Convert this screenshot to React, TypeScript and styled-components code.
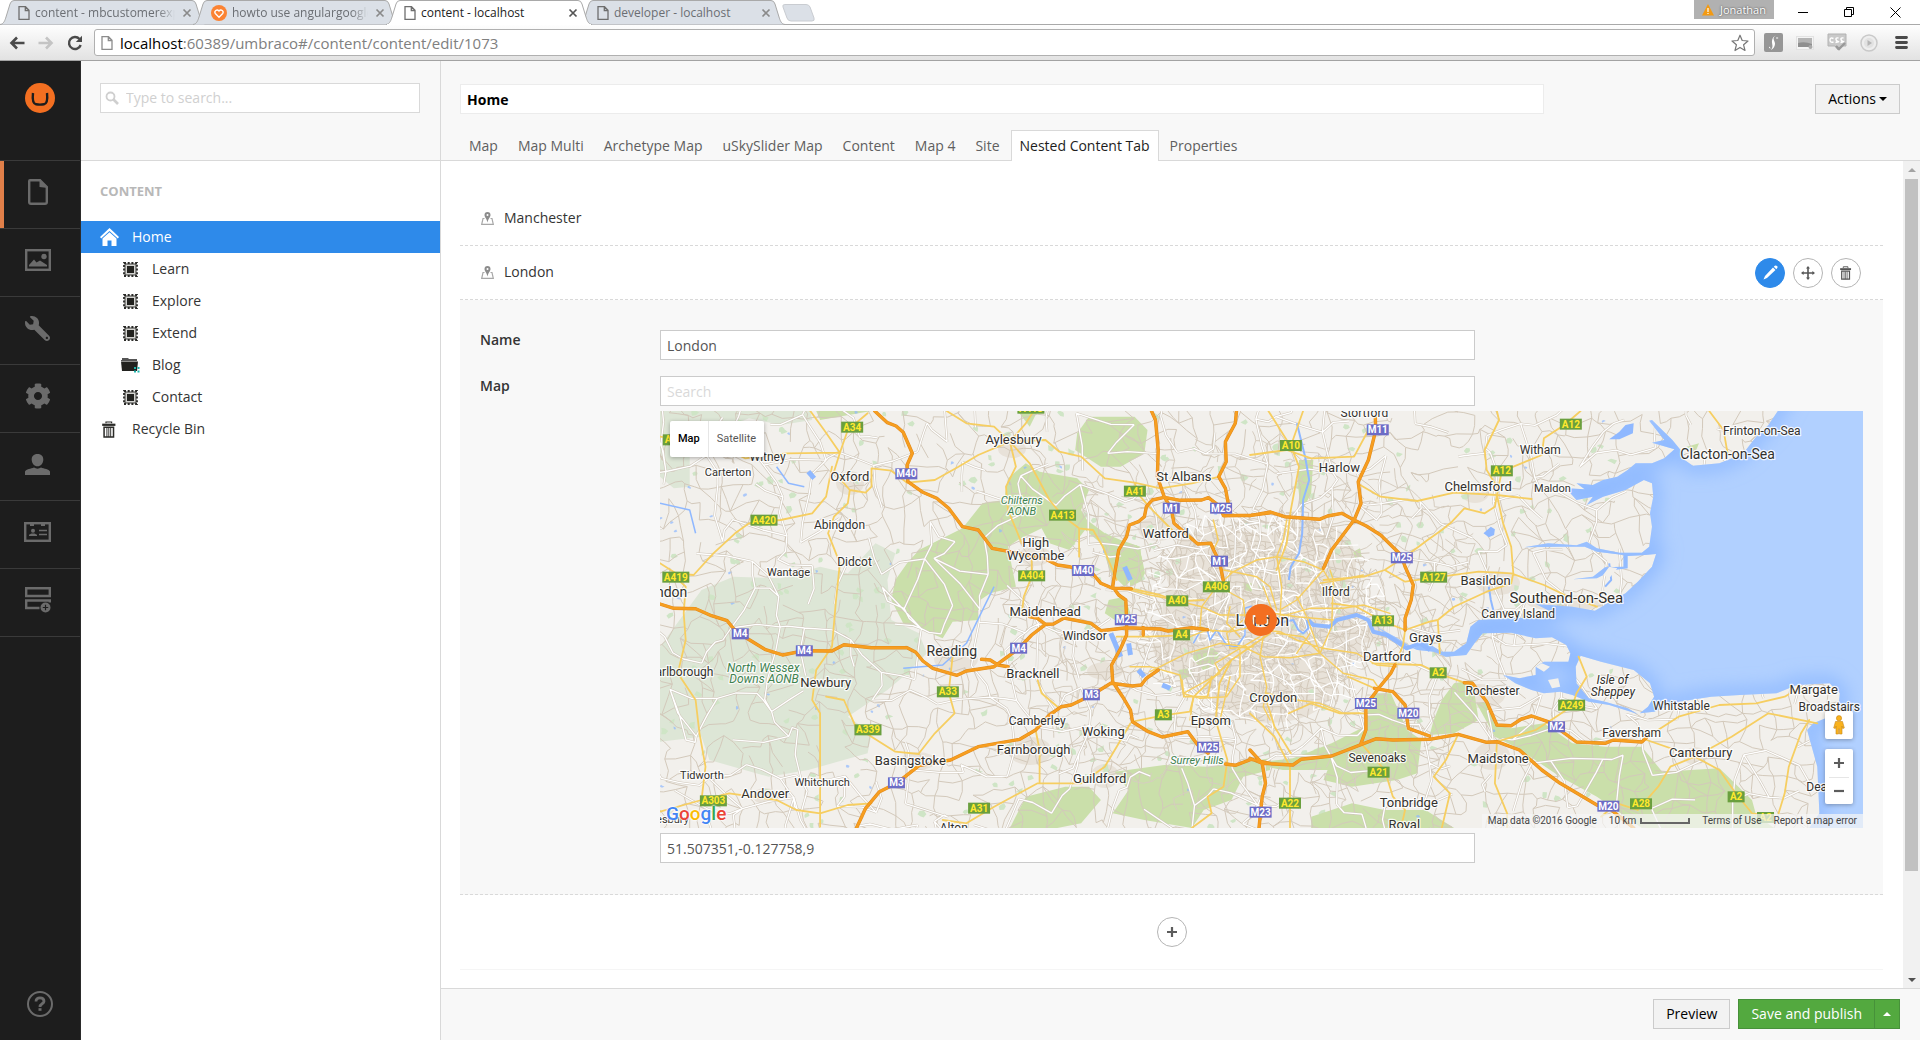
import React from "react";
import styled, { createGlobalStyle, css } from "styled-components";
import { FaCog, FaWrench } from "react-icons/fa";

const GlobalStyle = createGlobalStyle`
  *, *::before, *::after { box-sizing: border-box; }
  html, body, #root { height: 100%; }
  body { margin: 0; overflow: hidden; background: #fff; color: #343434; font: 14px/20px "Open Sans", "Noto Sans", sans-serif; }
  a { color: inherit; text-decoration: none; }
  button, input { font: inherit; color: inherit; margin: 0; border-radius: 0; }
  button { padding: 0; border: 0; background: none; cursor: pointer; }
  svg { display: block; flex: none; }
`;

/* ---------- browser window ---------- */

const Window = styled.div`display: flex; flex-direction: column; height: 100vh;`;
const TabStrip = styled.div`display: flex; align-items: flex-start; height: 25px; border-bottom: 1px solid #a9a9a9; background: #fff;`;
const TabSlot = styled.div<{ $active?: boolean }>`
  position: relative; z-index: ${p => (p.$active ? 2 : 1)}; display: flex; align-items: center;
  width: 193px; height: 25px; padding: 0 0 0 18px; color: ${p => (p.$active ? "#222" : "#6b6e73")};
`;
const TabShape = styled.svg`position: absolute; left: 0; top: 0; z-index: -1;`;
const TabTitle = styled.span<{ $fade?: boolean }>`
  flex: 1; margin-left: 5px; overflow: hidden; white-space: nowrap; font-size: 12px; line-height: 24px;
  ${p => p.$fade && css`mask-image: linear-gradient(to right, #000 88%, transparent);`}
`;
const TabClose = styled.button`width: 12px; height: 12px; margin: 0 0 0 6px;`;
const NewTab = styled.button`margin: 4px 0 0 10px;`;
const Spacer = styled.div`flex: 1;`;
const Profile = styled.button`
  display: flex; align-items: center; gap: 6px; height: 19px; width: 80px; padding: 0 8px; background: #b1b1b1; color: #fff;
  font-size: 11px; line-height: 18px; text-shadow: 0 0 2px #333;
`;
const WindowButton = styled.button`display: grid; place-items: center; width: 46px; height: 24px;`;
const WindowButtons = styled.div`display: flex; margin-left: 6px; padding-right: 2px;`;

const Toolbar = styled.div`
  display: flex; align-items: center; height: 36px; padding: 0 9px; border-bottom: 1px solid #a3a3a3;
  background: linear-gradient(#fefefe, #e2e2e2);
`;
const NavButton = styled.button`display: grid; place-items: center; width: 16px; height: 20px; margin-right: 13px;`;
const AddressBar = styled.div`
  display: flex; align-items: center; flex: 1; height: 27px; margin-left: -2px; padding: 0 5px 0 6px; border: 1px solid #b0b0b0; border-radius: 3px; background: #fff;
`;
const Address = styled.span`flex: 1; margin-left: 7px; font-size: 15px; line-height: 24px; color: #808080; b { font-weight: 400; color: #000; }`;
const Extensions = styled.div`display: flex; align-items: center; gap: 12px; margin-left: 8px;`;
const Extension = styled.button`display: grid; place-items: center; width: 20px; height: 20px;`;

/* ---------- back office ---------- */

const Office = styled.div`display: flex; flex: 1; min-height: 0;`;
const Sections = styled.nav`
  display: flex; flex-direction: column; width: 81px; background: #1d1d1d; border-right: 1px solid #2b2b2b; color: #6b6b6b;
`;
const Logo = styled.a`display: flex; justify-content: center; align-items: flex-start; height: 100px; padding-top: 22px; border-bottom: 1px solid #3a3a3a;`;
const Section = styled.a<{ $active?: boolean }>`
  display: grid; place-items: center; height: 68px; padding: 0 5px 5px 0; border-bottom: 1px solid #3a3a3a;
  box-shadow: ${p => (p.$active ? "inset 4px 0 0 #e07f49" : "none")};
`;
const Help = styled.a`display: grid; place-items: center; height: 72px; margin-top: auto;`;

const TreePane = styled.aside`width: 360px; border-right: 1px solid #d9d9d9; background: #fff;`;
const SearchBar = styled.form`height: 100px; padding: 22px 20px 0 19px; background: #f8f8f8; border-bottom: 1px solid #d9d9d9;`;
const SearchField = styled.label`
  display: flex; align-items: center; gap: 7px; height: 30px; padding: 0 4px; border: 1px solid #d9d9d9; background: #fff;
  input { flex: 1; min-width: 0; border: 0; padding: 0; outline: 0; background: none; &::placeholder { color: #d0d0d0; opacity: 1; } }
`;
const TreeTitle = styled.h2`margin: 20px 0 19px; padding-left: 19px; font-size: 13px; line-height: 21px; font-weight: 700; color: #b8b8b8; text-transform: uppercase;`;
const Tree = styled.ul`margin: 0; padding: 0; list-style: none;`;
const TreeLink = styled.a<{ $level: number; $selected?: boolean }>`
  display: flex; align-items: center; gap: ${p => (p.$level ? 12 : 13)}px; height: 32px; padding-left: ${p => (p.$level ? 39 : 18)}px;
  background: ${p => (p.$selected ? "#2e8aea" : "none")}; color: ${p => (p.$selected ? "#fff" : "#343434")};
`;
const TreeIcon = styled.span`display: grid; place-items: center; width: 20px;`;

const Editor = styled.main`display: flex; flex: 1; flex-direction: column; min-width: 0;`;
const EditorHeader = styled.header`
  display: flex; flex-direction: column; justify-content: space-between; height: 100px; padding: 23px 20px 0 19px;
  background: #f8f8f8; border-bottom: 1px solid #d9d9d9;
`;
const HeaderRow = styled.div`display: flex; justify-content: space-between; gap: 20px;`;
const NameInput = styled.input`flex: 0 1 1084px; min-width: 0; height: 30px; padding: 0 6px; border: 1px solid #ececec; background: #fff; outline: 0; font-size: 14px; font-weight: 700; color: #000;`;
const Button = styled.button<{ $primary?: boolean }>`
  display: flex; align-items: center; gap: 3px; height: 30px; padding: 0 12px; white-space: nowrap;
  border: 1px solid ${p => (p.$primary ? "#47913a" : "#cbcbcb")}; background: ${p => (p.$primary ? "#53a93f" : "#f2f2f2")};
  color: ${p => (p.$primary ? "#fff" : "#000")};
`;
const Caret = styled.span<{ $up?: boolean }>`
  width: 0; height: 0; border: 4px solid transparent;
  ${p => (p.$up ? css`border-top: 0; border-bottom-color: #fff;` : css`border-bottom: 0; border-top-color: #000;`)}
`;
const Tabs = styled.div`display: flex; gap: 2px; margin-bottom: -1px;`;
const Tab = styled.button<{ $active?: boolean }>`
  height: 31px; padding: 0 8px; border: 1px solid transparent; border-bottom: 0; color: #5f5f5f;
  ${p => p.$active && css`border-color: #d9d9d9; background: #fff; color: #1d1d1d;`}
`;

const Scroller = styled.div`display: flex; flex: 1; min-height: 0;`;
const Content = styled.div`flex: 1; min-width: 0; overflow: hidden; padding: 31px 20px 0 19px;`;
const Scrollbar = styled.div`display: flex; flex-direction: column; align-items: center; justify-content: space-between; width: 17px; padding: 7px 0 6px; background: #f1f1f1;`;
const Thumb = styled.div`width: 13px; flex: 0 0 85%; margin: 7px 0 auto; background: #c1c1c1;`;
const ScrollArrow = styled.span<{ $up?: boolean }>`
  width: 0; height: 0; border: 4px solid transparent;
  ${p => (p.$up ? css`border-top: 0; border-bottom-color: #a3a3a3;` : css`border-bottom: 0; border-top-color: #505050;`)}
`;
const ItemRow = styled.div`display: flex; align-items: center; gap: 10px; height: 54px; padding: 0 22px 0 21px; border-bottom: 1px dashed #d9d9d9;`;
const ItemName = styled.span`flex: 1; padding-bottom: 2px;`;
const ItemTools = styled.div`display: flex; gap: 8px;`;
const RoundButton = styled.button<{ $active?: boolean }>`
  display: grid; place-items: center; width: 30px; height: 30px; border-radius: 50%;
  border: 1px solid ${p => (p.$active ? "#2e8aea" : "#b5b5b5")}; background: ${p => (p.$active ? "#2e8aea" : "#fff")};
`;
const Panel = styled.div`display: grid; gap: 16px; padding: 30px 20px 31px; background: #f8f8f8; border-bottom: 1px dashed #d9d9d9;`;
const Field = styled.div`display: grid; grid-template-columns: 180px minmax(0, 1fr);`;
const FieldLabel = styled.label`font-weight: 600; line-height: 20px;`;
const FieldBody = styled.div`display: grid; gap: 5px;`;
const TextInput = styled.input`
  width: 100%; max-width: 815px; height: 30px; padding: 0 6px; border: 1px solid #cbcbcb; background: #fff; color: #555; outline: 0;
  &::placeholder { color: #d9d9d9; opacity: 1; }
`;
const AddRow = styled.div`display: flex; justify-content: center; padding: 22px 0;`;
const Divider = styled.hr`margin: 0; border: 0; border-top: 1px solid #f5f5f5;`;
const Footer = styled.footer`display: flex; justify-content: flex-end; height: 52px; padding: 10px 20px 0; background: #f8f8f8; border-top: 1px solid #d9d9d9;`;
const SplitButton = styled.div`display: flex; margin-left: 8px; button + button { margin-left: -1px; padding: 0 8px; }`;

/* ---------- map ---------- */

const MapFrame = styled.div`position: relative; height: 417px; overflow: hidden; background: #f2f0ec; font-family: Roboto, sans-serif;`;
const MapCanvas = styled.svg`width: 100%; height: 100%;`;
const MapTypes = styled.div`position: absolute; left: 10px; top: 10px; display: flex; border-radius: 2px; background: #fff; box-shadow: 0 1px 4px rgba(0, 0, 0, .3);`;
const MapType = styled.button<{ $active?: boolean }>`
  height: 36px; padding: 0 8px; font-size: 11px; color: ${p => (p.$active ? "#000" : "#565656")}; font-weight: ${p => (p.$active ? 500 : 400)};
  & + & { border-left: 1px solid #e6e6e6; }
`;
const MapSide = styled.div`position: absolute; right: 10px; bottom: 24px; display: grid; gap: 10px;`;
const MapBox = styled.div`display: grid; justify-items: center; width: 28px; border-radius: 2px; background: #fff; box-shadow: 0 1px 4px rgba(0, 0, 0, .3);`;
const MapButton = styled.button`
  display: grid; place-items: center; width: 28px; height: 28px;
  & + & { height: 27px; width: 20px; border-top: 1px solid #e6e6e6; }
`;
const GoogleMark = styled.a`
  position: absolute; left: 6px; bottom: 2px; font: 500 19px/24px Roboto, sans-serif; color: #4285f4;
  text-shadow: 0 0 2px #fff, 0 0 2px #fff, 0 0 3px #fff;
`;
const Letter = styled.span<{ $ink: string }>`color: ${p => p.$ink};`;
const Attribution = styled.div`
  position: absolute; right: 0; bottom: 0; display: flex; align-items: center; height: 14px; padding: 0 6px; gap: 12px;
  background: rgba(245, 245, 245, .72); font-size: 10px; line-height: 14px; color: #444;
`;
const Scale = styled.span`display: flex; align-items: center; gap: 4px;`;
const ScaleBar = styled.span`width: 50px; height: 6px; border: 2px solid #666; border-top: 0;`;

type Pt = [number, number];
type Sheet = (x: number, y: number) => Pt;
/* The survey is digitised in three sheets, each with its own grid. */
const west: Sheet = (x, y) => [(x - 25) / 2.529, (y - 33) / 3];
const east: Sheet = (x, y) => [590 + x / 2.45, (y - 33) / 3];
const city: Sheet = (x, y) => [470 + x / 3, 109 + y / 3];

const trace = (sheet: Sheet, points: string, closed = false) =>
  "M" + points.trim().split(/\s+/).map(p => {
    const [x, y] = p.split(",").map(Number);
    return sheet(x, y).map(n => n.toFixed(1)).join(" ");
  }).join("L") + (closed ? "Z" : "");

const motorwaysWest = [
  "25,612 60,625 115,626 155,647 195,662 210,685 228,703 290,748 335,765 390,752 460,753 490,734 560,743 650,743 672,757 690,783 715,805 776,826 800,813 870,800 932,746 965,705 1000,673 1020,672 1047,654 1115,670 1140,692 1205,683 1290,687 1310,693 1370,683 1410,689",
  "838,778 860,780 880,795 905,800", "960,650 980,655 1000,673", "1247,683 1247,705",
  "568,33 600,68 622,78 640,97 663,160 650,195 652,245 690,277 725,295 755,325 790,380 830,390 865,445 910,455 1000,477 1030,495 1060,500 1120,522 1140,550 1170,565 1217,566",
  "1568,338 1520,346 1450,347 1440,318 1412,293 1395,300 1340,301 1300,292 1270,300 1255,320 1250,350 1235,365 1212,375 1205,410 1185,450 1175,520 1170,560 1185,585 1203,600 1205,661 1205,705 1190,745 1167,795 1170,845 1195,890 1215,930 1220,965 1260,995 1295,1011 1360,995 1385,1035 1411,1060",
  "1455,1092 1480,1096 1520,1078 1568,1090",
  "1268,33 1278,60 1285,150 1283,230 1300,290 1318,326 1325,370 1385,432 1418,430 1425,450 1440,485 1450,545",
  "1483,33 1480,70 1455,125 1457,185 1438,230 1455,265 1462,310",
  "522,1284 545,1225 580,1175 623,1150 680,1097 760,1080 830,1040 935,1018 975,990 1010,945 1040,920 1065,915 1116,886 1165,850 1220,858 1242,855 1255,835 1285,810",
];
const motorwaysEast = [
  "0,347 50,336 85,350 170,358 190,348 225,340 255,360 285,378 320,405 370,465 380,500 400,555 395,600 380,655 380,690",
  "355,795 345,820 315,865 300,890 284,912 284,990 272,1030",
  "0,1075 30,1090 105,1095 125,1078 200,1068 310,1016 350,1020 440,1018 510,1003 580,1027 605,1025 660,1050 715,1110 760,1150 850,1215 880,1225 940,1284",
  "305,865 350,875 380,915 388,985 440,1008",
  "307,50 308,91 290,180 265,245 272,310 255,360 200,450 180,505",
  "525,848 545,850 580,905 605,975 640,977 665,957 690,948 730,965 751,982 800,1026 870,1030 890,1020 960,1026 972,1012",
  "0,1050 30,1090 38,1150 30,1190 22,1284",
];
const trunkWest = [
  "405,33 440,90 480,158 465,215 505,270 545,278 560,260 560,205 610,212 650,248 720,240 780,200 830,165 910,125 1000,120 1035,155 1090,170 1150,235 1225,248 1290,265 1370,250 1440,230",
  "25,110 180,140 240,175 345,160 480,158 500,90 550,40", "505,270 500,310 465,350 450,400 480,490 470,600 460,740 420,810 410,900 430,940 430,1280",
  "25,490 65,520 110,525 160,460 215,400 250,370 330,360 410,340 445,290 460,200",
  "65,533 90,560 85,640 90,720 70,820 115,900 125,1000 140,1100 130,1200",
  "910,125 925,200 900,260 905,330 940,430", "910,125 960,190 1010,300 1043,347 1085,385 1120,390 1145,440 1180,540",
  "965,480 965,529 945,590 940,640", "765,770 755,877 770,940 720,1000 680,1060", "445,890 490,900 520,980 560,1010 620,1055 680,1062",
  "25,1235 130,1200 200,1180 320,1200 370,1230 430,1240 500,1215 560,1210", "740,1260 800,1270 870,1220 980,1150 1090,1150 1150,1100 1180,1040 1215,970",
  "1220,965 1298,946 1365,935 1375,890 1470,780 1568,700", "1217,566 1290,585 1333,604 1400,600",
  "1180,710 1260,710 1344,706",
  "1470,780 1440,850 1430,960 1460,1080 1450,1160 1410,1190 1420,1240 1370,1284", "980,840 990,880 1030,920", "1085,385 1085,470",
  "1225,248 1240,290 1262,320 1320,390", "750,33 800,70 870,80 910,125 950,70 970,33", "975,990 985,1050 985,1150",
  "1345,840 1350,890 1410,890 1420,830",
];
const trunkEast = [
  "130,33 100,138 120,200 100,330 90,430 65,510", "0,165 90,150 150,175 255,170 290,90", "270,255 320,290 410,303 500,278 605,285 690,297",
  "810,33 770,75 720,115 715,165 617,214 605,285", "605,33 610,60 575,150 580,210 605,260", "605,285 620,370 640,440 645,520 640,550",
  "605,285 600,320 575,340 525,325 495,365 470,390 435,420 380,470 330,510 280,530 180,540", "330,510 380,545 450,533 560,515 640,520 720,555 780,590 850,620",
  "200,610 260,620 326,664 380,690 440,665 460,660 500,620 580,575 640,550", "460,660 465,760", "380,690 375,735 355,795",
  "300,790 420,795 461,820 525,848", "240,830 305,865", "40,900 60,980 100,1060", "272,1030 330,1110 350,1190 380,1230 370,1284",
  "0,940 60,1010 98,1100 98,1284", "510,1003 480,1080 450,1130 490,1180 470,1284", "605,1025 600,1150 630,1240 630,1284", "605,1025 700,990 750,950 790,917 800,880 825,830 805,770",
  "972,1012 1050,950 1150,915 1240,910 1310,890 1350,860", "972,1020 1090,1070 1150,1110 1190,1180 1230,1240 1284,1250", "1090,1070 1030,1100 1000,1160 950,1230",
  "1090,1070 1180,1010 1270,940 1390,970", "1370,960 1350,1000 1320,1100 1310,1180 1295,1240", "1125,33 1160,90 1170,160", "45,33 90,120",
  "95,940 150,910 220,940 284,940", "860,1250 900,1210 950,1230",
];
const trunkCity = [
  "0,210 60,225 110,235 215,260 270,285 350,285", "260,195 340,240 345,290", "300,160 380,120 440,110 520,125 580,150 600,185", "310,155 380,170 420,200 440,270",
  "280,150 310,155 260,200 215,260 210,320 250,335", "470,0 460,60 440,110 455,200 450,290", "250,0 265,60 250,90", "570,190 630,180 700,165",
  "180,350 230,330 300,335 370,320 450,290 540,265 640,265 700,255 780,280", "500,230 530,290 570,400 520,350 440,340", "400,200 430,280 500,290 610,300",
  "600,150 610,180 605,320 570,400", "400,330 450,335 500,360 580,385 680,400 740,435 800,440", "340,380 400,410 480,413 570,400 640,460 730,480 750,510",
  "390,350 330,385 255,430 270,460 160,520", "0,440 60,440 150,465 160,520 210,535 290,530 330,470 330,390", "400,350 390,410 410,500 400,560 420,600",
  "350,380 270,370 170,400 60,455", "190,530 180,600", "300,470 270,600", "410,520 500,540 570,550 640,580 690,580", "500,400 540,340", "580,150 500,240 450,270",
  "340,300 290,340 300,385 370,380", "300,260 290,310 330,350",
];
const seaPath = trace(east,
  "1330,-60 1293,33 1270,75 1240,110 1215,150 1190,170 1150,190 1085,197 1065,180 1055,150 1035,120 985,60 978,62 1015,120 985,128 1040,148 1015,175 985,190 945,190 925,210 900,230 865,240 840,255 800,250 820,268 775,265 785,280 800,300 840,290 825,315 865,290 920,270 965,240 985,250 988,290 980,340 985,380 978,440 960,458 905,458 850,445 825,425 800,436 730,430 670,442 760,440 820,440 850,455 915,465 915,500 870,502 840,530 790,538 850,535 890,510 925,505 925,468 960,466 995,462 985,500 950,545 920,580 890,600 845,632 790,620 700,612 745,640 720,652 640,655 560,660 540,680 530,730 500,755 470,755 430,725 400,745 355,710 310,680 360,725 410,750 450,755 480,770 530,765 550,730 570,700 640,698 700,715 740,712 775,735 785,760 780,785 720,785 700,800 700,825 660,835 620,825 650,850 690,870 720,880 760,875 790,885 830,905 880,915 950,942 925,925 870,905 830,895 800,850 798,800 810,767 860,785 940,810 980,850 990,890 975,920 955,940 990,935 1050,905 1130,890 1200,885 1290,880 1340,855 1420,850 1445,880 1440,940 1380,970 1365,990 1390,1100 1395,1240 1370,1284 1350,1400 1650,1400 1650,-60", true);

const palesWest = [
  "25,33 405,33 410,60 330,75 250,55 180,90 100,120 100,260 60,265 25,230",
  "25,740 130,570 210,530 330,535 430,500 500,520 570,430 620,460 600,540 610,660 680,700 700,760 640,830 600,870 500,950 560,1000 550,1060 400,1110 300,1130 150,1080 130,1010 25,1025",
];
const greensWest = [
  "620,540 650,490 680,450 790,385 840,310 895,300 905,235 950,190 985,215 1080,235 1110,270 1090,330 1105,360 1150,400 1190,420 1240,440 1245,510 1200,560 1165,520 1140,430 1100,390 1060,450 1010,430 990,385 930,420 905,440 925,560 860,580 835,600 830,660 765,665 740,715 690,690 640,670 610,600",
  "1080,100 1110,50 1225,50 1258,90 1250,160 1190,200 1140,200 1075,150", "1160,600 1200,590 1215,640 1175,660 1150,640", "560,33 420,33 430,60",
  "1175,1115 1300,1095 1410,1100 1460,1095 1568,1075 1568,1110 1500,1130 1470,1200 1400,1230 1370,1284 1250,1260 1170,1240 1210,1170",
  "950,1190 1050,1160 1110,1160 1140,1200 1090,1270 1030,1284 910,1284", "1400,750 1430,770 1410,810 1390,790", "930,33 980,33 960,80",
];
const greensEast = [
  "0,1090 105,1075 200,1030 280,980 300,880 345,880 385,990 420,1020 410,1120 360,1140 250,1160 180,1140 190,1110 80,1110", "470,900 500,850 545,840 560,960 500,1000 440,1005 450,960",
  "555,910 580,905 600,975 640,985 720,970 790,1030 870,1040 960,1040 1010,1115 1150,1105 1230,1200 1240,1245 1284,1284 960,1284 850,1190 760,1130 650,1040 600,1010",
  "150,1250 250,1210 330,1230 430,1230 500,1284 150,1284", "120,180 155,180 150,280 125,340 118,260", "1070,140 1100,130 1090,160",
];
const parksCity = [
  "190,400 215,385 250,385 270,405 245,440 220,450 190,420", "340,190 365,190 365,215 345,210", "145,450 180,445 190,465 150,480", "0,90 20,75 35,110 45,160 30,185 0,200", "670,95 690,85 695,110 675,115",
];
const urban: [number, number, number, number][] = [
  [598, 205, 96, 84], [560, 160, 54, 44], [650, 150, 46, 40], [610, 270, 66, 42], [540, 230, 48, 40], [660, 230, 44, 30], [296, 248, 22, 13], [190, 72, 14, 12], [352, 38, 14, 9], [498, 118, 20, 12], [700, 222, 26, 10],
  [815, 82, 14, 10], [838, 172, 22, 12], [905, 192, 38, 8], [820, 285, 25, 12], [832, 345, 18, 14], [370, 340, 22, 14], [445, 365, 14, 12], [258, 350, 18, 9], [1035, 345, 12, 9], [375, 145, 16, 10], [445, 260, 18, 9], [105, 385, 12, 8],
];

const rng = (seed: number) => () => {
  seed = (seed * 1664525 + 1013904223) >>> 0;
  return seed / 4294967296;
};

/* Local roads: a shaken lattice of nodes joined to their neighbours. */
const lanes = (seed: number, step: number, keep: number, inside: (x: number, y: number) => boolean) => {
  const r = rng(seed);
  const cols = Math.ceil(1203 / step) + 2;
  const rows = Math.ceil(417 / step) + 2;
  const node: Pt[][] = [];
  for (let j = 0; j < rows; j++) {
    node.push([]);
    for (let i = 0; i < cols; i++) node[j].push([(i - .5 + (r() - .5) * .9) * step, (j - .5 + (r() - .5) * .9) * step]);
  }
  let d = "";
  const join = (a: Pt, b: Pt) => {
    const mx = (a[0] + b[0]) / 2 + (r() - .5) * step * .35;
    const my = (a[1] + b[1]) / 2 + (r() - .5) * step * .35;
    if (r() < keep && inside(mx, my)) d += `M${a[0].toFixed(1)} ${a[1].toFixed(1)}L${mx.toFixed(1)} ${my.toFixed(1)}L${b[0].toFixed(1)} ${b[1].toFixed(1)}`;
  };
  for (let j = 0; j < rows - 1; j++)
    for (let i = 0; i < cols - 1; i++) {
      join(node[j][i], node[j][i + 1]);
      join(node[j][i], node[j + 1][i]);
      if (r() < .2) join(node[j][i], node[j + 1][i + 1]);
    }
  return d;
};
const inLondon = (x: number, y: number) => ((x - 600) / 125) ** 2 + ((y - 205) / 105) ** 2 < 1;
const nearLondon = (x: number, y: number) => ((x - 590) / 250) ** 2 + ((y - 215) / 190) ** 2 < 1;
const countryLanes = lanes(7, 17, .66, () => true);
const suburbLanes = lanes(41, 13, .4, nearLondon);
const sideRoads = lanes(21, 34, .42, () => true);
const streets = lanes(5, 7, .66, inLondon);
const boroughRoads = lanes(33, 14, .62, inLondon);

const scatter = (seed: number, count: number, size: number, maxX: number) => {
  const r = rng(seed);
  let d = "";
  for (let k = 0; k < count; k++) {
    const x = r() * maxX, y = r() * 417;
    const pts = Array.from({ length: 6 }, (_, i) => {
      const a = (i / 6) * Math.PI * 2, q = size * (.35 + r() * .9);
      return `${(x + Math.cos(a) * q).toFixed(1)} ${(y + Math.sin(a) * q * .9).toFixed(1)}`;
    });
    d += "M" + pts.join("L") + "Z";
  }
  return d;
};
const copses = scatter(3, 330, 4, 960);
const ponds = scatter(12, 70, 2, 960);

type Label = [Sheet, number, number, string, number, ("park" | "isle" | "end" | "start")?];
const labels: Label[] = [
  [west, 919, 118, "Aylesbury", 13], [west, 505, 229, "Oxford", 13], [west, 297, 170, "Witney", 12], [west, 197, 217, "Carterton", 11], [west, 479, 374, "Abingdon", 12],
  [west, 517, 485, "Didcot", 12], [west, 350, 517, "Wantage", 11], [west, 940, 300, "Chilterns", 11, "park"], [west, 940, 332, "AONB", 11, "park"], [west, 975, 427, "High", 13],
  [west, 975, 466, "Wycombe", 13], [west, 1350, 229, "St Albans", 13], [west, 1304, 400, "Watford", 13], [west, 999, 634, "Maidenhead", 13], [west, 1099, 706, "Windsor", 12],
  [west, 763, 754, "Reading", 14], [west, 968, 819, "Bracknell", 13], [west, 94, 577, "Swindon", 14, "end"], [west, 160, 814, "Marlborough", 12, "end"],
  [west, 286, 804, "North Wessex", 12, "park"], [west, 288, 836, "Downs AONB", 12, "park"], [west, 444, 848, "Newbury", 13], [west, 979, 961, "Camberley", 12], [west, 1146, 994, "Woking", 13],
  [west, 970, 1048, "Farnborough", 13], [west, 658, 1081, "Basingstoke", 13], [west, 131, 1125, "Tidworth", 11], [west, 435, 1146, "Whitchurch", 11], [west, 291, 1180, "Andover", 13],
  [west, 1137, 1134, "Guildford", 13], [west, 1383, 1080, "Surrey Hills", 11, "park"], [west, 1418, 961, "Epsom", 13], [west, 768, 1284, "Alton", 12], [west, 98, 1257, "Amesbury", 11, "end"],
  [east, 280, 38, "Stortford", 12], [east, 219, 202, "Harlow", 13], [east, 711, 148, "Witham", 12], [east, 559, 260, "Chelmsford", 13], [east, 741, 264, "Maldon", 11],
  [east, 1254, 91, "Frinton-on-Sea", 12], [east, 1170, 163, "Clacton-on-Sea", 14], [east, 210, 574, "Ilford", 12], [east, 577, 541, "Basildon", 13], [east, 775, 592, "Southend-on-Sea", 15],
  [east, 657, 642, "Canvey Island", 12], [east, 430, 712, "Grays", 13], [east, 336, 769, "Dartford", 13], [east, 57, 892, "Croydon", 13], [east, 594, 871, "Rochester", 12],
  [east, 888, 838, "Isle of", 12, "isle"], [east, 889, 874, "Sheppey", 12, "isle"], [east, 1381, 868, "Margate", 13], [east, 1419, 919, "Broadstairs", 12], [east, 1057, 916, "Whitstable", 12],
  [east, 935, 997, "Faversham", 12], [east, 1104, 1058, "Canterbury", 13], [east, 312, 1072, "Sevenoaks", 12], [east, 608, 1075, "Maidstone", 13], [east, 389, 1207, "Tonbridge", 13],
  [east, 378, 1274, "Royal", 13], [east, 1363, 1160, "Deal", 12, "start"], [east, 30, 661, "London", 16],
];
const shields: [Sheet, number, number, string][] = [
  [west, 511, 83, "A34"], [west, 60, 121, "A40"], [west, 648, 223, "M40"], [west, 288, 362, "A420"], [west, 65, 533, "A419"], [west, 1226, 275, "A41"], [west, 1043, 347, "A413"],
  [west, 1318, 326, "M1"], [west, 1444, 326, "M25"], [west, 1440, 485, "M1"], [west, 1095, 513, "M40"], [west, 965, 529, "A404"], [west, 1432, 562, "A406"], [west, 1333, 604, "A40"],
  [west, 1203, 661, "M25"], [west, 1344, 706, "A4"], [west, 228, 703, "M4"], [west, 390, 754, "M4"], [west, 932, 746, "M4"], [west, 1116, 886, "M3"], [west, 753, 877, "A33"],
  [west, 1298, 946, "A3"], [west, 551, 991, "A339"], [west, 1411, 1043, "M25"], [west, 623, 1150, "M3"], [west, 160, 1204, "A303"], [west, 832, 1226, "A31"], [west, 963, 26, "A418"],
  [east, 26, 1238, "M23"], [east, 313, 91, "M11"], [east, 100, 138, "A10"], [east, 786, 74, "A12"], [east, 617, 214, "A12"], [east, 372, 475, "M25"], [east, 450, 533, "A127"],
  [east, 326, 664, "A13"], [east, 461, 820, "A2"], [east, 284, 912, "M25"], [east, 388, 941, "M20"], [east, 788, 917, "A249"], [east, 751, 982, "M2"], [east, 315, 1118, "A21"],
  [east, 98, 1211, "A22"], [east, 878, 1220, "M20"], [east, 958, 1213, "A28"], [east, 1191, 1192, "A2"], [east, 1263, 1254, "A2"],
];

const PlaceName = styled.text<{ $size: number; $kind?: string }>`
  font: ${p => (p.$kind === "park" || p.$kind === "isle" ? "italic " : "")}400 ${p => p.$size}px Roboto, sans-serif;
  fill: ${p => (p.$kind === "park" ? "#3f8250" : "#33312d")};
  stroke: #fff; stroke-width: 2.5px; stroke-opacity: .85; stroke-linejoin: round; paint-order: stroke;
  text-anchor: ${p => (p.$kind === "end" || p.$kind === "start" ? p.$kind : "middle")};
`;
const ShieldText = styled.text`font: 700 10px Roboto, sans-serif; text-anchor: middle;`;

const join = (sheet: Sheet, lines: string[], closed = false) => lines.map(p => trace(sheet, p, closed)).join("");
const motorwayPath = join(west, motorwaysWest) + join(east, motorwaysEast);
const trunkPath = join(west, trunkWest) + join(east, trunkEast);
const cityPath = join(city, trunkCity);

function RoadMap() {
  return (
    <MapCanvas viewBox="0 0 1203 417" preserveAspectRatio="xMidYMid slice" role="img" aria-label="Map of London and the south east of England">
      <defs>
        <clipPath id="sea"><path d={seaPath} /></clipPath>
        <filter id="shore"><feGaussianBlur stdDeviation="9" /></filter>
        <mask id="cutout">
          <rect x="-17" y="-17" width="34" height="34" fill="#fff" />
          <path d="M-7-5V2Q-7 6 0 6T7 2V-5" fill="none" stroke="#000" strokeWidth="2.6" />
        </mask>
      </defs>
      <rect width="1203" height="417" fill="#f2f0ec" />
      {palesWest.map(p => <path key={p} d={trace(west, p, true)} fill="#dde6d6" />)}
      {urban.map(([x, y, rx, ry]) => <ellipse key={`${x}-${y}`} cx={x} cy={y} rx={rx} ry={ry} fill="#e8e2d9" />)}
      <path d={copses} fill="#cfe5c6" />
      {greensWest.map(p => <path key={p} d={trace(west, p, true)} fill="#cadfaa" />)}
      {greensEast.map(p => <path key={p} d={trace(east, p, true)} fill="#cadfaa" />)}
      <path d={join(city, parksCity, true)} fill="#cadfaa" />
      <path d={ponds} fill="#8fb8ff" opacity=".7" />
      <g fill="none" strokeLinejoin="round">
        <path d={countryLanes} stroke="#d3c9bb" strokeWidth="1" />
        <path d={suburbLanes} stroke="#d6cdc0" strokeWidth="1" />
        <path d={streets} stroke="#d3c9bb" strokeWidth="1" />
        <path d={sideRoads} stroke="#cfc7bb" strokeWidth="2.4" />
        <path d={sideRoads} stroke="#fff" strokeWidth="1.3" />
        <path d={boroughRoads} stroke="#fff" strokeWidth="1.2" />
        <path d={trace(east, "115,70 135,170 145,240 130,300 128,400 120,460 100,500 95,540")} stroke="#8fb8ff" strokeWidth="2" />
        <path d={trace(west, "1200,500 1215,540") + trace(west, "1165,700 1190,770") + trace(west, "1210,730 1215,765") + trace(west, "1235,810 1250,830") + trace(west, "400,215 415,235") + trace(west, "1295,855 1315,865")} stroke="#8fb8ff" strokeWidth="5" />
        <path d={trace(west, "25,310 100,330 115,400") + trace(west, "320,200 350,250 390,260") + trace(west, "640,805 740,795 800,730 845,620 870,560") + trace(city, "190,370 210,335 230,325 240,360 260,330 290,375 320,380 345,345 345,265 365,258")} stroke="#8fb8ff" strokeWidth="1.5" />
      </g>
      <path d={seaPath} fill="#b1d0ff" />
      <g clipPath="url(#sea)"><path d={seaPath} fill="none" stroke="#86b3ff" strokeOpacity=".8" strokeWidth="14" filter="url(#shore)" /></g>
      <path d={trace(east, "600,388 598,405 585,412 572,400 590,380", true) + trace(east, "920,75 940,70 938,100 905,118 880,118 905,95", true)} fill="#8fb8ff" />
      <g fill="none" stroke="#8fb8ff" strokeLinejoin="round">
        <path d={trace(city, "535,300 550,315 600,320 620,300 680,285 715,300 730,335 770,345 830,385 870,370 900,390")} strokeWidth="4" />
        <path d={trace(city, "440,310 490,300 505,330 520,340 535,325 530,300")} strokeWidth="2" />
        <path d={trace(east, "585,560 590,600 600,650") + trace(east, "880,490 885,540 870,560")} strokeWidth="2" />
      </g>
      <path d={trace(east, "700,800 715,790 735,800 720,815", true) + trace(east, "730,840 755,835 760,860 740,865", true) + trace(east, "880,500 900,505 880,535 865,525", true)} fill="#f2f0ec" />
      <g fill="none" strokeLinejoin="round" strokeLinecap="round">
        <path d={cityPath} stroke="#f6ce61" strokeWidth="1.4" />
        <path d={trunkPath} stroke="#f6ce61" strokeWidth="1.8" />
        <path d={motorwayPath} stroke="#e08a1c" strokeWidth="3.4" />
        <path d={motorwayPath} stroke="#f79e20" strokeWidth="2.4" />
      </g>
      {shields.map(([sheet, sx, sy, code]) => {
        const [x, y] = sheet(sx, sy);
        const w = code.length * 5 + 7;
        const motorway = code[0] === "M";
        return (
          <g key={`${code}${sx}`}>
            <rect x={x - w / 2} y={y - 6} width={w} height={11} fill={motorway ? "#6c6cc6" : "#6a9f3e"} />
            <ShieldText x={x} y={y + 3} fill={motorway ? "#fff" : "#ffe92e"}>{code}</ShieldText>
          </g>
        );
      })}
      {labels.map(([sheet, sx, sy, name, size, kind]) => {
        const [x, y] = sheet(sx, sy);
        return <PlaceName key={name} x={x} y={y + size * .36} $size={size} $kind={kind}>{name}</PlaceName>;
      })}
      <g transform="translate(601 209)">
        <circle r="16" fill="#f36f21" mask="url(#cutout)" />
      </g>
    </MapCanvas>
  );
}

/* ---------- icons ---------- */

const PageIcon = ({ tone = "#6e6e6e" }) => (
  <svg width="12" height="14" viewBox="0 0 12 14" fill="none" stroke={tone} strokeWidth="1.3"><path d="M1 .7H7.500L11 4.200V13.300H1ZM7.300 1V4.500H11" /></svg>
);
const CloseIcon = ({ tone = "#8a8a8a" }) => (
  <svg width="12" height="12" viewBox="0 0 12 12" stroke={tone} strokeWidth="1.700"><path d="M2.500 2.500L9.500 9.500M9.500 2.500L2.500 9.500" /></svg>
);
const UmbracoMark = () => (
  <svg width="30" height="30" viewBox="0 0 30 30"><circle cx="15" cy="15" r="15" fill="#f36f21" /><path d="M8 10Q6.800 20.500 11 21.300Q15 22 19 21.300Q23.200 20.500 22 10" fill="none" stroke="#1d1d1d" strokeWidth="2.400" /></svg>
);
const DocumentIcon = () => (
  <svg width="20" height="26" viewBox="0 0 20 26"><path d="M2 1.200H12L18.800 8V23Q18.800 24.800 17 24.800H3Q1.200 24.800 1.200 23V2Q1.200 1.200 2 1.200Z" fill="none" stroke="currentColor" strokeWidth="2.400" /><path d="M11.500 0L20 9L11.500 8Z" fill="currentColor" /></svg>
);
const MediaIcon = () => (
  <svg width="26" height="22" viewBox="0 0 26 22"><rect x="1.200" y="1.200" width="23.600" height="19.600" fill="none" stroke="currentColor" strokeWidth="2.400" /><circle cx="19" cy="7.500" r="2.700" fill="currentColor" /><path d="M4 17.500V16L9 10.500L11.500 13.500L15 11.500L22 16V17.500Z" fill="currentColor" /></svg>
);
const FlippedWrench = styled(FaWrench)`transform: scaleX(-1);`;
const UserIcon = () => (
  <svg width="25" height="21" viewBox="0 0 25 21" fill="currentColor"><path d="M12.500 0C16.500 0 18.500 2.500 18.300 6C18 9.500 15.800 12.300 12.500 12.300S7 9.500 6.700 6C6.500 2.500 8.500 0 12.500 0ZM0 21V17.500C1 15 6 14.700 9 13.500C11 15 14 15 16 13.500C19 14.700 24 15 25 17.500V21Z" /></svg>
);
const MemberIcon = () => (
  <svg width="27" height="20" viewBox="0 0 27 20" fill="none" stroke="currentColor"><rect x="1.200" y="1.200" width="24.600" height="17.600" strokeWidth="2.400" /><path d="M6 2.500H10M17 2.500H21" strokeWidth="3" /><path d="M15 8.500H23M15 12.500H23" strokeWidth="1.600" /><circle cx="9" cy="8.800" r="2" fill="currentColor" stroke="none" /><path d="M5 14V12.800L7.500 11.500H10.500L13 12.800V14Z" fill="currentColor" stroke="none" /></svg>
);
const FormsIcon = () => (
  <svg width="26" height="26" viewBox="0 0 26 26" fill="none" stroke="currentColor" strokeWidth="2.400"><path d="M1.200 1.200H24.800V9H1.200Z" /><path d="M14.500 21H1.200V13.500H24.800V15.500" /><circle cx="20.500" cy="20.500" r="5" fill="currentColor" stroke="none" /><path d="M20.500 17.800V23.200M17.800 20.500H23.200" stroke="#1d1d1d" strokeWidth="1.200" /></svg>
);
const HelpIcon = () => (
  <svg width="26" height="26" viewBox="0 0 26 26" fill="none" stroke="currentColor"><circle cx="13" cy="13" r="12" strokeWidth="2" /><path d="M9 10.500Q9 6.800 13 6.800T17 10.200C17 13 13 12.500 13 16" strokeWidth="2.800" /><path d="M11.500 18.500H14.500" strokeWidth="2.600" /></svg>
);
const HomeIcon = () => (
  <svg width="19" height="18" viewBox="0 0 19 18" fill="#fff"><path d="M9.500 0L13 3.300L19 9L17.800 10.400L9.500 3L1.200 10.400L0 9Z" /><path d="M9.500 4.200L16.500 10.500V18H11.500V12.500H7.500V18H2.500V10.500Z" /></svg>
);
const StampIcon = () => (
  <svg width="15" height="15" viewBox="0 0 15 15"><rect x="1" y="1" width="13" height="13" fill="none" stroke="#2b2b28" strokeWidth="1.800" strokeDasharray="2 1.700" /><rect x="2" y="2" width="11" height="11" fill="#d5d5d2" stroke="#2b2b28" strokeWidth=".9" /><rect x="4" y="4" width="7" height="7" fill="#22221f" /></svg>
);
const FolderIcon = () => (
  <svg width="19" height="16" viewBox="0 0 19 16"><path d="M1 3V1H7L8 2H16V4H0V3Z" fill="#555" /><path d="M0 4.500H17L16 14H1Z" fill="#22221f" /><path d="M13 10h2v2h-2zM16.500 10h2v2h-2zM13 13.500h2v2h-2zM16.500 13.500h2v2h-2z" fill="#1fb5ad" /></svg>
);
const TrashIcon = ({ size = 17, tone = "#2b2b28" }) => (
  <svg width={size * .8} height={size} viewBox="0 0 14 18" fill="none" stroke={tone}><path d="M4 2.500V1H10V2.500" strokeWidth="1.200" /><path d="M0 4H14" strokeWidth="2.400" /><path d="M2 6.500H12V17H2Z" strokeWidth="1.600" /><path d="M5 7V17M7 7V17M9 7V17" strokeWidth="1" /></svg>
);
const PinIcon = () => (
  <svg width="13" height="13" viewBox="0 0 13 13"><path d="M3.500 6.500H2L.7 12.300H12.300L11 6.500H9.500" fill="none" stroke="#a8a8a8" strokeWidth="1.200" /><path d="M6.500 0A3 3 0 0 1 9.500 3C9.500 5.500 7.500 6 6.500 10.500C5.500 6 3.500 5.500 3.500 3A3 3 0 0 1 6.500 0Z" fill="#8c8c8c" /><circle cx="6.500" cy="3" r="1" fill="#fff" /></svg>
);
const PencilIcon = () => (
  <svg width="15" height="15" viewBox="0 0 15 15" fill="#fff"><path d="M10 2.500L12.500 5L4 13L.5 14.500L2 11ZM10.800 1.700Q12.500-.2 14 1T13.300 4.200Z" /></svg>
);
const MoveIcon = () => (
  <svg width="14" height="14" viewBox="0 0 14 14" fill="#555"><path d="M6.200 2H7.800V6.200H12V7.800H7.800V12H6.200V7.800H2V6.200H6.200Z" /><path d="M7 0L9 2.600H5ZM7 14L5 11.400H9ZM0 7L2.600 5V9ZM14 7L11.400 9V5Z" /></svg>
);
const PlusIcon = ({ minus = false }) => (
  <svg width="10" height="10" viewBox="0 0 10 10" stroke="#5c5c5c" strokeWidth="2.200"><path d={minus ? "M0 5H10" : "M0 5H10M5 0V10"} /></svg>
);
const Pegman = () => (
  <svg width="12" height="20" viewBox="0 0 12 20" fill="#f9b21d" stroke="#c8871a" strokeWidth=".6"><circle cx="6" cy="3.200" r="2.600" /><path d="M2.500 6.500H9.500L11.300 13L9.700 13.500L9 11V19H6.500V14H5.500V19H3V11L2.300 13.500L.7 13Z" /></svg>
);

/* ---------- page data ---------- */

const browserTabs = [
  { title: "content - mbcustomerexperience", fade: true, icon: "page" },
  { title: "howto use angulargooglemaps", fade: true, icon: "heart" },
  { title: "content - localhost", icon: "page", active: true },
  { title: "developer - localhost", icon: "page" },
];
const sections = [
  { name: "Content", icon: <DocumentIcon />, active: true }, { name: "Media", icon: <MediaIcon /> }, { name: "Settings", icon: <FlippedWrench size={25} /> },
  { name: "Developer", icon: <FaCog size={26} /> }, { name: "Users", icon: <UserIcon /> }, { name: "Members", icon: <MemberIcon /> }, { name: "Forms", icon: <FormsIcon /> },
];
const tree = [
  { name: "Home", level: 0, icon: <HomeIcon />, selected: true }, { name: "Learn", level: 1, icon: <StampIcon /> }, { name: "Explore", level: 1, icon: <StampIcon /> },
  { name: "Extend", level: 1, icon: <StampIcon /> }, { name: "Blog", level: 1, icon: <FolderIcon /> }, { name: "Contact", level: 1, icon: <StampIcon /> }, { name: "Recycle Bin", level: 0, icon: <TrashIcon /> },
];
const editorTabs = ["Map", "Map Multi", "Archetype Map", "uSkySlider Map", "Content", "Map 4", "Site", "Nested Content Tab", "Properties"];

function BrowserChrome() {
  return (
    <>
      <TabStrip>
        {browserTabs.map(t => (
          <TabSlot key={t.title} $active={t.active}>
            <TabShape width="206" height="25" viewBox="0 0 206 25">
              <path d="M0 24.500C4 24 5 20 6 17L10 4Q11 .5 14 .5H192Q195 .5 196 4L200 17C201 20 202 24 206 24.500" fill={t.active ? "#fff" : "#dbe0e7"} stroke="#a9a9a9" />
              {t.active && <path d="M1 24.500H205" stroke="#fff" />}
            </TabShape>
            {t.icon === "heart" ? (
              <svg width="16" height="16" viewBox="0 0 16 16"><circle cx="8" cy="8" r="8" fill="#fb8333" /><path d="M8 12.300L4.300 8.500C2.800 6.500 5.800 3.500 8 6C10.200 3.500 13.200 6.500 11.700 8.500Z" fill="none" stroke="#fff" strokeWidth="1.300" /></svg>
            ) : <PageIcon />}
            <TabTitle $fade={t.fade}>{t.title}</TabTitle>
            <TabClose aria-label={`Close ${t.title}`}><CloseIcon tone={t.active ? "#555" : undefined} /></TabClose>
          </TabSlot>
        ))}
        <NewTab aria-label="New tab"><svg width="34" height="18" viewBox="0 0 34 18"><path d="M3 .5H24Q27 .5 28 3L32 14Q33 17 30 17H9Q6 17 5 14L1 3Q0 .5 3 .5Z" fill="#dbe0e7" stroke="#c9ccd1" /></svg></NewTab>
        <Spacer />
        <Profile><svg width="12" height="12" viewBox="0 0 12 12"><path d="M6 0L12 11.500H0Z" fill="#f39a12" /><path d="M6 4V8M6 9V10" stroke="#fff" strokeWidth="1.200" /></svg>Jonathan</Profile>
        <WindowButtons>
          <WindowButton aria-label="Minimise"><svg width="10" height="10" viewBox="0 0 10 10" stroke="#000"><path d="M0 5.500H10" /></svg></WindowButton>
          <WindowButton aria-label="Restore"><svg width="10" height="10" viewBox="0 0 10 10" stroke="#000" fill="none"><path d="M.5 2.500H7.500V9.500H.5ZM2.500 2V.5H9.500V7.500H8" /></svg></WindowButton>
          <WindowButton aria-label="Close"><svg width="11" height="11" viewBox="0 0 11 11" stroke="#000"><path d="M.5 .5L10.500 10.500M10.500 .5L.5 10.500" /></svg></WindowButton>
        </WindowButtons>
      </TabStrip>
      <Toolbar>
        <NavButton aria-label="Back"><svg width="16" height="14" viewBox="0 0 16 14" stroke="#4a4a4a" strokeWidth="2.600" fill="none"><path d="M15.500 7H3M8 1.500L2.500 7L8 12.500" /></svg></NavButton>
        <NavButton aria-label="Forward"><svg width="16" height="14" viewBox="0 0 16 14" stroke="#c4c4c4" strokeWidth="2.600" fill="none"><path d="M.5 7H13M8 1.500L13.500 7L8 12.500" /></svg></NavButton>
        <NavButton aria-label="Reload"><svg width="16" height="16" viewBox="0 0 16 16"><path d="M12.500 4A6 6 0 1 0 13.700 10" fill="none" stroke="#4a4a4a" strokeWidth="2.400" /><path d="M15 .8V7H8.800Z" fill="#4a4a4a" /></svg></NavButton>
        <AddressBar>
          <PageIcon tone="#8c8c8c" />
          <Address><b>localhost</b>:60389/umbraco#/content/content/edit/1073</Address>
          <svg width="18" height="18" viewBox="0 0 18 18"><path d="M9 1.200L11.200 6.500L17 7L12.600 10.800L14 16.500L9 13.400L4 16.500L5.400 10.800L1 7L6.800 6.500Z" fill="none" stroke="#777" strokeWidth="1.200" strokeLinejoin="round" /></svg>
        </AddressBar>
        <Extensions>
          <Extension aria-label="Script extension"><svg width="19" height="19" viewBox="0 0 19 19"><rect width="19" height="19" rx="2" fill="#969696" /><path d="M12 2.500C7 5 11.500 8.500 11 11C10.800 14 9 16 7 17C10 13 7.500 11 8 8C8.200 5 10 3 12 2.500ZM5 13.500L7 15.500L5 15ZM12.500 4L14.500 5L12.500 6Z" fill="#fff" /></svg></Extension>
          <Extension aria-label="Screenshot extension"><svg width="18" height="16" viewBox="0 0 18 16"><rect x=".5" y="1.500" width="17" height="13" fill="#f4f4f4" stroke="#e2e2e2" /><rect x="2" y="3" width="14" height="6" fill="#b4b4b4" /><path d="M2 8Q9 6 16 9V12H2Z" fill="#8f8f8f" /><circle cx="14.500" cy="12" r="2" fill="#aaa" /></svg></Extension>
          <Extension aria-label="CSS extension"><svg width="20" height="19" viewBox="0 0 20 19"><path d="M1 1H19V13H14L11 17L8 13H1Z" fill="#c9c9c9" stroke="#b3b3b3" /><path d="M6.500 5.500Q3 4 3 7T6.500 9M11.500 5Q8.500 4.500 9 6.500T11.200 8.500T8.500 9.500M16.500 5Q13.500 4.500 14 6.500T16.200 8.500T13.500 9.500" fill="none" stroke="#fff" strokeWidth="1.400" /><path d="M9 13L12 16L18 10" stroke="#999" strokeWidth="2.400" fill="none" /></svg></Extension>
          <Extension aria-label="Play extension"><svg width="18" height="18" viewBox="0 0 18 18"><circle cx="9" cy="9" r="8" fill="#eee" stroke="#c9c9c9" strokeWidth="1.500" /><circle cx="9" cy="9" r="5" fill="#e2e2e2" /><path d="M7.500 6L12 9L7.500 12Z" fill="#b5b5b5" /></svg></Extension>
          <Extension aria-label="Menu"><svg width="13" height="13" viewBox="0 0 13 13" stroke="#4a4a4a" strokeWidth="2.800" strokeLinecap="round"><path d="M1.500 1.500H11.500M1.500 6.500H11.500M1.500 11.500H11.500" /></svg></Extension>
        </Extensions>
      </Toolbar>
    </>
  );
}

function MapPicker() {
  return (
    <MapFrame>
      <RoadMap />
      <MapTypes>
        <MapType $active>Map</MapType>
        <MapType>Satellite</MapType>
      </MapTypes>
      <GoogleMark href="#google" aria-label="Google">
        G<Letter $ink="#ea4335">o</Letter><Letter $ink="#fbbc05">o</Letter>g<Letter $ink="#34a853">l</Letter><Letter $ink="#ea4335">e</Letter>
      </GoogleMark>
      <MapSide>
        <MapBox><MapButton aria-label="Street View"><Pegman /></MapButton></MapBox>
        <MapBox>
          <MapButton aria-label="Zoom in"><PlusIcon /></MapButton>
          <MapButton aria-label="Zoom out"><PlusIcon minus /></MapButton>
        </MapBox>
      </MapSide>
      <Attribution>
        <span>Map data ©2016 Google</span>
        <Scale>10 km <ScaleBar /></Scale>
        <a href="#terms">Terms of Use</a>
        <a href="#report">Report a map error</a>
      </Attribution>
    </MapFrame>
  );
}

export default function App() {
  return (
    <Window>
      <GlobalStyle />
      <BrowserChrome />
      <Office>
        <Sections aria-label="Sections">
          <Logo href="#umbraco" aria-label="Umbraco"><UmbracoMark /></Logo>
          {sections.map(s => <Section key={s.name} href={`#${s.name.toLowerCase()}`} aria-label={s.name} $active={s.active}>{s.icon}</Section>)}
          <Help href="#help" aria-label="Help"><HelpIcon /></Help>
        </Sections>
        <TreePane>
          <SearchBar>
            <SearchField>
              <svg width="14" height="14" viewBox="0 0 14 14" fill="none" stroke="#cfcfcf"><circle cx="5.500" cy="5.500" r="4" strokeWidth="1.800" /><path d="M8.500 8.500L13 13" strokeWidth="2.600" /></svg>
              <input placeholder="Type to search..." aria-label="Type to search" />
            </SearchField>
          </SearchBar>
          <TreeTitle>Content</TreeTitle>
          <Tree>
            {tree.map(n => (
              <li key={n.name}>
                <TreeLink href={`#${n.name}`} $level={n.level} $selected={n.selected}><TreeIcon>{n.icon}</TreeIcon>{n.name}</TreeLink>
              </li>
            ))}
          </Tree>
        </TreePane>
        <Editor>
          <EditorHeader>
            <HeaderRow>
              <NameInput defaultValue="Home" aria-label="Page name" />
              <Button>Actions <Caret /></Button>
            </HeaderRow>
            <Tabs role="tablist">
              {editorTabs.map(t => <Tab key={t} role="tab" $active={t === "Nested Content Tab"} aria-selected={t === "Nested Content Tab"}>{t}</Tab>)}
            </Tabs>
          </EditorHeader>
          <Scroller>
            <Content>
              <ItemRow><PinIcon /><ItemName>Manchester</ItemName></ItemRow>
              <ItemRow>
                <PinIcon /><ItemName>London</ItemName>
                <ItemTools>
                  <RoundButton $active aria-label="Edit"><PencilIcon /></RoundButton>
                  <RoundButton aria-label="Move"><MoveIcon /></RoundButton>
                  <RoundButton aria-label="Delete"><TrashIcon size={14} tone="#555" /></RoundButton>
                </ItemTools>
              </ItemRow>
              <Panel>
                <Field>
                  <FieldLabel htmlFor="name">Name</FieldLabel>
                  <FieldBody><TextInput id="name" defaultValue="London" /></FieldBody>
                </Field>
                <Field>
                  <FieldLabel htmlFor="search">Map</FieldLabel>
                  <FieldBody>
                    <TextInput id="search" placeholder="Search" />
                    <MapPicker />
                    <TextInput defaultValue="51.507351,-0.127758,9" aria-label="Coordinates" />
                  </FieldBody>
                </Field>
              </Panel>
              <AddRow><RoundButton aria-label="Add item"><PlusIcon /></RoundButton></AddRow>
              <Divider />
            </Content>
            <Scrollbar aria-hidden="true"><ScrollArrow $up /><Thumb /><ScrollArrow /></Scrollbar>
          </Scroller>
          <Footer>
            <Button>Preview</Button>
            <SplitButton>
              <Button $primary>Save and publish</Button>
              <Button $primary aria-label="More publishing options"><Caret $up /></Button>
            </SplitButton>
          </Footer>
        </Editor>
      </Office>
    </Window>
  );
}
